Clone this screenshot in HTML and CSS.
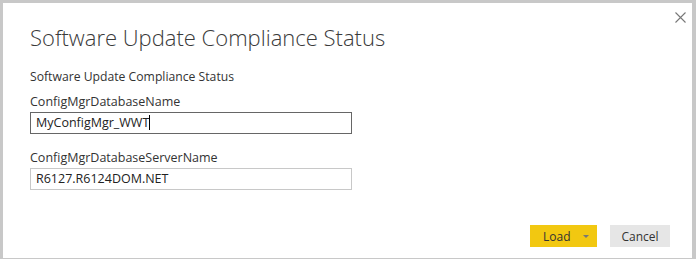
FILE: index.html
```html
<!DOCTYPE html>
<html>
<head>
    <title>Software Update Compliance Status</title>
    <meta charset="utf-8">
    <link rel="stylesheet" href="styles.css">
</head>
<body>
    <div class="dialog">
        <button class="close" title="Close">
            <svg width="11" height="11" viewBox="0 0 11 11">
                <path d="M0.5 0.5 L10.5 10.5 M10.5 0.5 L0.5 10.5" stroke="#777" stroke-width="1.1" fill="none"/>
            </svg>
        </button>

        <h1 class="title">Software Update Compliance Status</h1>
        <div class="subtitle">Software Update Compliance Status</div>

        <div class="field">
            <label>ConfigMgrDatabaseName</label>
            <div class="input focused">MyConfigMgr_WWT<span class="caret"></span></div>
        </div>

        <div class="field">
            <label>ConfigMgrDatabaseServerName</label>
            <div class="input">R6127.R6124DOM.NET</div>
        </div>

        <div class="footer">
            <button class="btn primary">
                <span class="btn-label">Load</span>
                <span class="arrow"></span>
            </button>
            <button class="btn">Cancel</button>
        </div>
    </div>
</body>
</html>
```

FILE: styles.css
```css
html, body {
    margin: 0;
    padding: 0;
    height: 100%;
}
body {
    font-family: "Open Sans", "Liberation Sans", sans-serif;
    color: #333;
    background-color: #fff;
}
.dialog {
    position: relative;
    box-sizing: border-box;
    height: 259px;
    border-style: solid;
    border-color: #c8c8c8;
    border-width: 3px 4px 1px 3px;
    padding: 20px 22px 11px 27px;
    display: flex;
    flex-direction: column;
}
.close {
    position: absolute;
    top: 5px;
    right: 2px;
    width: 19px;
    height: 19px;
    padding: 0;
    border: none;
    background: none;
    display: flex;
    align-items: center;
    justify-content: center;
}
.title {
    margin: 0;
    font-weight: 300;
    font-size: 22px;
    line-height: 28px;
    color: #3a3a3a;
}
.subtitle {
    margin-top: 18px;
    font-size: 12.2px;
    line-height: 16px;
}
.field {
    margin-top: 9px;
    display: flex;
    flex-direction: column;
    width: 322px;
}
.field + .field {
    margin-top: 16px;
}
.field label {
    font-size: 12.5px;
    line-height: 16px;
    margin-bottom: 2px;
}
.input {
    box-sizing: border-box;
    height: 22px;
    border: 1px solid #c8c8c8;
    padding: 0 5px;
    font-size: 12.5px;
    line-height: 20px;
    color: #222;
}
.input.focused {
    border-color: #666;
}
.caret {
    display: inline-block;
    width: 1px;
    height: 15px;
    background-color: #000;
    vertical-align: -3px;
}
.footer {
    margin-top: auto;
    display: flex;
    justify-content: flex-end;
    gap: 13px;
}
.btn {
    box-sizing: border-box;
    height: 22px;
    width: 60px;
    border: none;
    padding: 0;
    font-family: inherit;
    font-size: 12px;
    color: #333;
    background-color: #e6e6e6;
}
.btn.primary {
    width: 67px;
    padding: 0 8px 0 13px;
    background-color: #f2c811;
    display: flex;
    align-items: center;
    justify-content: space-between;
}
.arrow {
    width: 0;
    height: 0;
    border-left: 3px solid transparent;
    border-right: 3px solid transparent;
    border-top: 3px solid #777;
}
```
